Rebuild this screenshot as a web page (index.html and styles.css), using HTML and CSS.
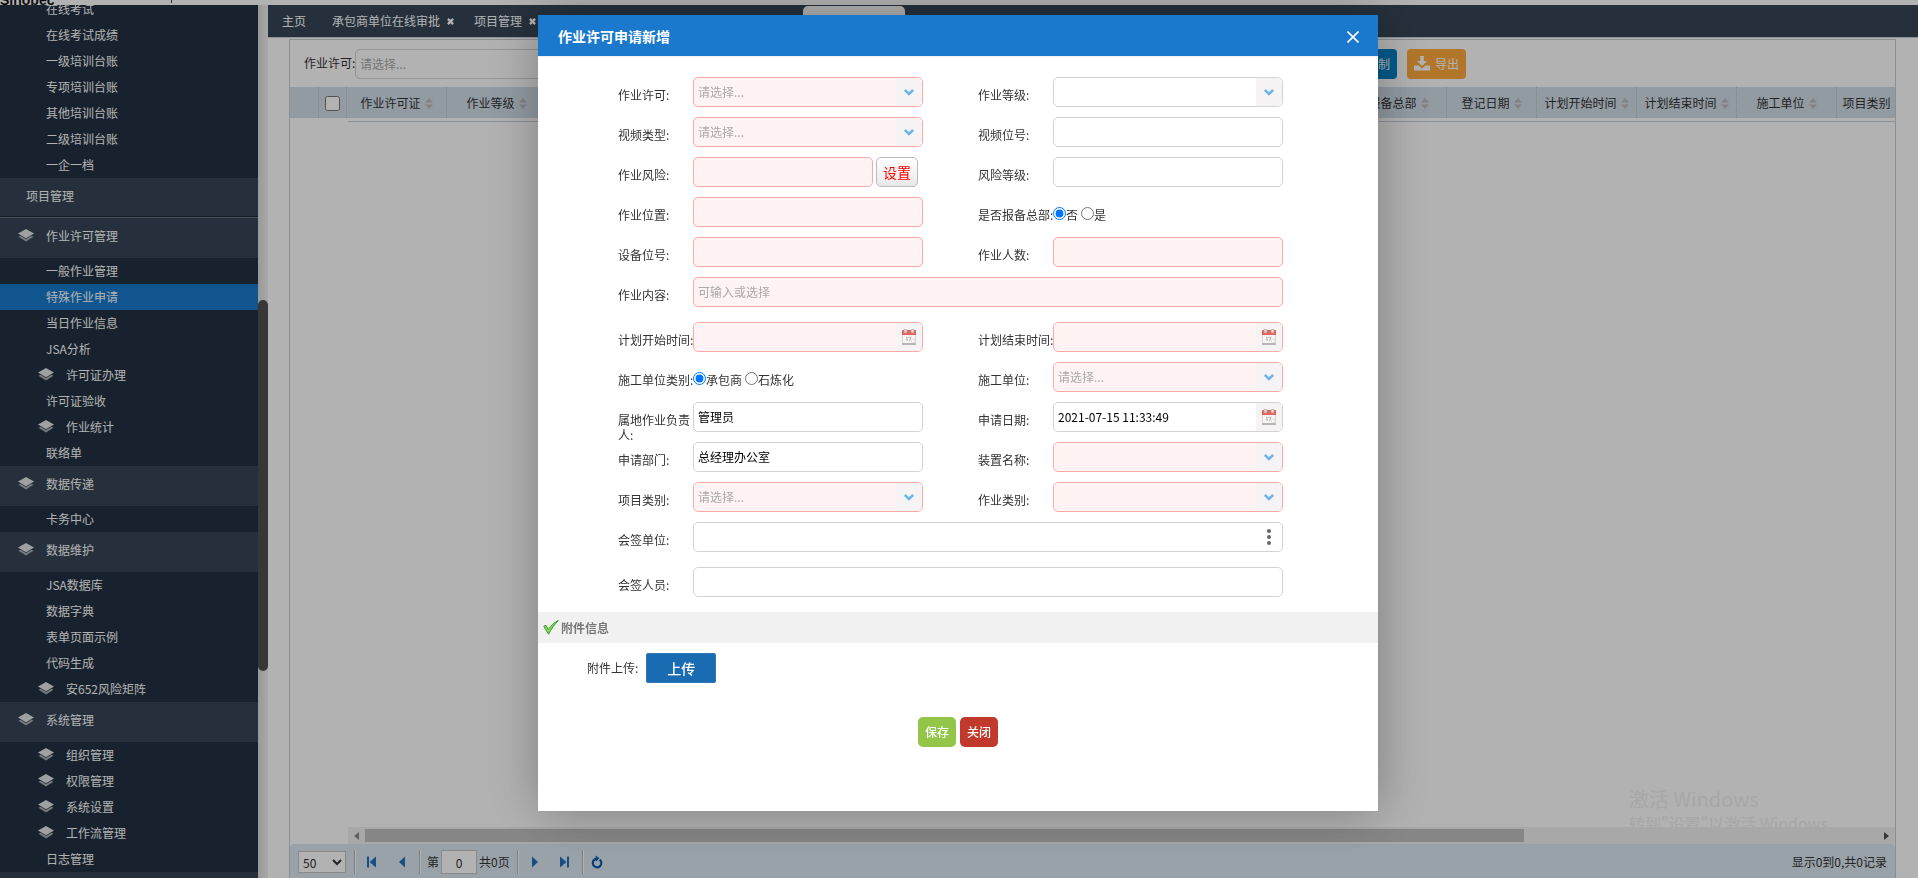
FILE: index.html
```html
<!DOCTYPE html>
<html lang="zh-CN">
<head>
  <meta charset="UTF-8" />
  <meta name="viewport" content="width=device-width, initial-scale=1.0" />
  <title>作业许可申请新增</title>
  <link rel="stylesheet" href="styles.css">
</head>
<body>
  <svg class="sprite" aria-hidden="true">
    <symbol id="layers" viewBox="0 0 16 14">
      <path d="M8 0 16 4.5 8 9.2 0 4.5Z" fill="#e4e6e8" />
      <path d="M0.5 7.8 2.6 6.7 8 9.9 13.4 6.7 15.5 7.8 8 12.6Z" fill="#a9aeb3" />
    </symbol>
    <symbol id="chevron" viewBox="0 0 10 7">
      <path d="M0.8 1 5 5 9.2 1" fill="none" stroke="#6fb7ea" stroke-width="2.6" />
    </symbol>
    <symbol id="calendar" viewBox="0 0 14 16">
      <rect x="0" y="2" width="14" height="13" fill="#f6f2f1" />
      <rect x="0" y="1" width="14" height="5" fill="#e8625f" />
      <path d="M0.5 6V15M13.5 6V15" stroke="#d9d5d4" fill="none" />
      <rect x="0" y="14" width="14" height="2" fill="#b9b5b4" />
      <rect x="2" y="0" width="3" height="4" rx="1" fill="#d8d4d3" stroke="#aaa6a5" stroke-width="0.5" />
      <rect x="9" y="0" width="3" height="4" rx="1" fill="#d8d4d3" stroke="#aaa6a5" stroke-width="0.5" />
      <path d="M4 8.5 5 8V12M6.5 8.3H9L7.5 12" fill="none" stroke="#b5b1b0" />
      <circle cx="11" cy="12" r="1.8" fill="#fff" stroke="#d0cccb" stroke-width="0.6" />
    </symbol>
    <symbol id="sort" viewBox="0 0 8 11">
      <path d="M4 0 8 4.5H0ZM4 11 8 6.5H0Z" fill="#bcbcbc" />
    </symbol>
    <symbol id="cross" viewBox="0 0 6 6">
      <path d="M0.8 0.8 5.2 5.2M5.2 0.8 0.8 5.2" stroke="#fff" stroke-width="2" />
    </symbol>
  </svg>

  <header class="top"><b>Sinopec</b><i class="tick"></i></header>

  <div class="page">
    <aside class="sidebar">
      <nav class="menu">
        <a href="#">在线考试</a>
        <a href="#">在线考试成绩</a>
        <a href="#">一级培训台账</a>
        <a href="#">专项培训台账</a>
        <a href="#">其他培训台账</a>
        <a href="#">二级培训台账</a>
        <a href="#">一企一档</a>
        <a href="#" class="module">项目管理</a>
        <a href="#" class="group"><svg><use href="#layers" /></svg>作业许可管理</a>
        <a href="#">一般作业管理</a>
        <a href="#" class="active">特殊作业申请</a>
        <a href="#">当日作业信息</a>
        <a href="#">JSA分析</a>
        <a href="#" class="sub"><svg><use href="#layers" /></svg>许可证办理</a>
        <a href="#">许可证验收</a>
        <a href="#" class="sub"><svg><use href="#layers" /></svg>作业统计</a>
        <a href="#">联络单</a>
        <a href="#" class="group"><svg><use href="#layers" /></svg>数据传递</a>
        <a href="#">卡务中心</a>
        <a href="#" class="group"><svg><use href="#layers" /></svg>数据维护</a>
        <a href="#">JSA数据库</a>
        <a href="#">数据字典</a>
        <a href="#">表单页面示例</a>
        <a href="#">代码生成</a>
        <a href="#" class="sub"><svg><use href="#layers" /></svg>安652风险矩阵</a>
        <a href="#" class="group"><svg><use href="#layers" /></svg>系统管理</a>
        <a href="#" class="sub"><svg><use href="#layers" /></svg>组织管理</a>
        <a href="#" class="sub"><svg><use href="#layers" /></svg>权限管理</a>
        <a href="#" class="sub"><svg><use href="#layers" /></svg>系统设置</a>
        <a href="#" class="sub"><svg><use href="#layers" /></svg>工作流管理</a>
        <a href="#">日志管理</a>
      </nav>
      <div class="vscroll"><div class="vthumb"></div></div>
    </aside>

    <main class="main">
      <div class="tabs">
        <a href="#">主页</a>
        <a href="#">承包商单位在线审批<svg><use href="#cross" /></svg></a>
        <a href="#">项目管理<svg><use href="#cross" /></svg></a>
        <span class="current"></span>
      </div>

      <section class="panel">
        <div class="toolbar">
          <label for="filter">作业许可:</label>
          <div class="combo filter">
            <select id="filter" class="empty"><option>请选择...</option></select>
            <span class="trigger"><svg class="chevron"><use href="#chevron" /></svg></span>
          </div>
          <div class="tools">
            <button type="button" class="btn blue">复制</button>
            <button type="button" class="btn orange">
              <svg viewBox="0 0 16 15"><path d="M6.2 0H9.8V5H13L8 10 3 5H6.2ZM0 9.5H4.6L8 12.6 11.4 9.5H16V14.5H0Z" fill="#fff" /></svg>导出
            </button>
          </div>
        </div>

        <div class="grid">
          <table>
            <thead>
              <tr>
                <th class="w-num"></th>
                <th class="w-check"><input type="checkbox" aria-label="全选" /></th>
                <th class="w-100">作业许可证<svg><use href="#sort" /></svg></th>
                <th class="w-100">作业等级<svg><use href="#sort" /></svg></th>
                <th></th>
                <th class="w-120">是否报备总部<svg><use href="#sort" /></svg></th>
                <th class="w-90">登记日期<svg><use href="#sort" /></svg></th>
                <th class="w-100">计划开始时间<svg><use href="#sort" /></svg></th>
                <th class="w-100">计划结束时间<svg><use href="#sort" /></svg></th>
                <th class="w-100">施工单位<svg><use href="#sort" /></svg></th>
                <th class="w-last">项目类别<svg><use href="#sort" /></svg></th>
              </tr>
            </thead>
          </table>
          <div class="rows">
            <div class="watermark">
              <p class="big">激活 Windows</p>
              <p>转到"设置"以激活 Windows.</p>
            </div>
          </div>
          <div class="hscroll">
            <svg viewBox="0 0 5 8"><path d="M5 0V8L0 4Z" fill="#888" /></svg>
            <div class="htrack"><div class="hthumb"></div></div>
            <svg viewBox="0 0 5 8"><path d="M0 0V8L5 4Z" fill="#505050" /></svg>
          </div>
        </div>

        <footer class="pager">
          <select aria-label="每页条数"><option>50</option></select>
          <i class="sep"></i>
          <button type="button" aria-label="首页"><svg viewBox="0 0 10 11"><path d="M0 0H2V11H0ZM9 0V11L2.5 5.5Z" fill="#2470bd" /></svg></button>
          <button type="button" aria-label="上一页"><svg viewBox="0 0 10 11"><path d="M8 0V11L2 5.5Z" fill="#2470bd" /></svg></button>
          <i class="sep"></i>
          <label for="pageno">第</label>
          <input type="text" id="pageno" value="0" />
          <span class="pages">共0页</span>
          <i class="sep"></i>
          <button type="button" aria-label="下一页"><svg viewBox="0 0 10 11"><path d="M2 0V11L8 5.5Z" fill="#2470bd" /></svg></button>
          <button type="button" aria-label="末页"><svg viewBox="0 0 10 11"><path d="M7 0H9V11H7ZM0 0V11L6.5 5.5Z" fill="#2470bd" /></svg></button>
          <i class="sep"></i>
          <button type="button" class="refresh" aria-label="刷新"><svg viewBox="0 0 12 14"><path d="M8.6 4.6A4.3 4.3 0 1 1 5 3.9" fill="none" stroke="#0a5cb0" stroke-width="2.2" /><path d="M4.6 0.6 8.4 3.3 5 6.4Z" fill="#0a5cb0" /></svg></button>
          <span class="total">显示0到0,共0记录</span>
        </footer>
      </section>
    </main>
  </div>

  <div class="mask">
    <div class="modal" role="dialog" aria-labelledby="dlg-title">
      <div class="modal-head">
        <h2 id="dlg-title">作业许可申请新增</h2>
        <button type="button" class="close" aria-label="关闭窗口"><svg viewBox="0 0 12 12"><path d="M0.5 0.5 11.5 11.5M11.5 0.5 0.5 11.5" stroke="#fff" stroke-width="1.6" /></svg></button>
      </div>

      <form class="form">
        <div class="row">
          <div class="field">
            <label for="permit">作业许可:</label>
            <div class="combo required">
              <select id="permit" class="empty"><option>请选择...</option></select>
              <span class="trigger"><svg class="chevron"><use href="#chevron" /></svg></span>
            </div>
          </div>
          <div class="field">
            <label for="level">作业等级:</label>
            <div class="combo">
              <select id="level"><option></option></select>
              <span class="trigger"><svg class="chevron"><use href="#chevron" /></svg></span>
            </div>
          </div>
        </div>
        <div class="row">
          <div class="field">
            <label for="video">视频类型:</label>
            <div class="combo required">
              <select id="video" class="empty"><option>请选择...</option></select>
              <span class="trigger"><svg class="chevron"><use href="#chevron" /></svg></span>
            </div>
          </div>
          <div class="field">
            <label for="videono">视频位号:</label>
            <div class="combo"><input type="text" id="videono" /></div>
          </div>
        </div>
        <div class="row">
          <div class="field">
            <label for="risk">作业风险:</label>
            <div class="combo required"><input type="text" id="risk" /></div>
            <button type="button" class="set">设置</button>
          </div>
          <div class="field">
            <label for="risklevel">风险等级:</label>
            <div class="combo"><input type="text" id="risklevel" /></div>
          </div>
        </div>
        <div class="row">
          <div class="field">
            <label for="place">作业位置:</label>
            <div class="combo required"><input type="text" id="place" /></div>
          </div>
          <div class="field" role="radiogroup" aria-labelledby="report-label">
            <span class="label" id="report-label">是否报备总部:</span>
            <div class="radios">
              <label><input type="radio" name="report" checked />否</label>
              <label><input type="radio" name="report" />是</label>
            </div>
          </div>
        </div>
        <div class="row">
          <div class="field">
            <label for="device">设备位号:</label>
            <div class="combo required"><input type="text" id="device" /></div>
          </div>
          <div class="field">
            <label for="people">作业人数:</label>
            <div class="combo required"><input type="text" id="people" /></div>
          </div>
        </div>
        <div class="row tall">
          <div class="field">
            <label for="content">作业内容:</label>
            <div class="combo required"><input type="text" id="content" placeholder="可输入或选择" /></div>
          </div>
        </div>
        <div class="row">
          <div class="field">
            <label for="start">计划开始时间:</label>
            <div class="combo required">
              <input type="text" id="start" />
              <span class="trigger"><svg class="calendar"><use href="#calendar" /></svg></span>
            </div>
          </div>
          <div class="field">
            <label for="end">计划结束时间:</label>
            <div class="combo required">
              <input type="text" id="end" />
              <span class="trigger"><svg class="calendar"><use href="#calendar" /></svg></span>
            </div>
          </div>
        </div>
        <div class="row">
          <div class="field" role="radiogroup" aria-labelledby="unit-label">
            <span class="label" id="unit-label">施工单位类别:</span>
            <div class="radios">
              <label><input type="radio" name="unittype" checked />承包商</label>
              <label><input type="radio" name="unittype" />石炼化</label>
            </div>
          </div>
          <div class="field">
            <label for="unit">施工单位:</label>
            <div class="combo required">
              <select id="unit" class="empty"><option>请选择...</option></select>
              <span class="trigger"><svg class="chevron"><use href="#chevron" /></svg></span>
            </div>
          </div>
        </div>
        <div class="row">
          <div class="field">
            <label for="owner">属地作业负责人:</label>
            <div class="combo"><input type="text" id="owner" value="管理员" /></div>
          </div>
          <div class="field">
            <label for="applydate">申请日期:</label>
            <div class="combo">
              <input type="text" id="applydate" value="2021-07-15 11:33:49" />
              <span class="trigger"><svg class="calendar"><use href="#calendar" /></svg></span>
            </div>
          </div>
        </div>
        <div class="row">
          <div class="field">
            <label for="dept">申请部门:</label>
            <div class="combo"><input type="text" id="dept" value="总经理办公室" /></div>
          </div>
          <div class="field">
            <label for="plant">装置名称:</label>
            <div class="combo required">
              <select id="plant"><option></option></select>
              <span class="trigger"><svg class="chevron"><use href="#chevron" /></svg></span>
            </div>
          </div>
        </div>
        <div class="row">
          <div class="field">
            <label for="project">项目类别:</label>
            <div class="combo required">
              <select id="project" class="empty"><option>请选择...</option></select>
              <span class="trigger"><svg class="chevron"><use href="#chevron" /></svg></span>
            </div>
          </div>
          <div class="field">
            <label for="worktype">作业类别:</label>
            <div class="combo required">
              <select id="worktype"><option></option></select>
              <span class="trigger"><svg class="chevron"><use href="#chevron" /></svg></span>
            </div>
          </div>
        </div>
        <div class="row tall">
          <div class="field">
            <label for="signunit">会签单位:</label>
            <div class="combo">
              <input type="text" id="signunit" />
              <span class="trigger plain"><svg class="dots" viewBox="0 0 4 16"><circle cx="2" cy="2" r="2" /><circle cx="2" cy="8" r="2" /><circle cx="2" cy="14" r="2" /></svg></span>
            </div>
          </div>
        </div>
        <div class="row">
          <div class="field">
            <label for="signer">会签人员:</label>
            <div class="combo"><input type="text" id="signer" /></div>
          </div>
        </div>
      </form>

      <h3 class="section">
        <svg viewBox="0 0 16 15"><path d="M0.8 6.2 3 5.4 5.4 9.6C8 5.6 11.3 2.4 15.3 0.6 11.5 4.4 8.4 8.6 5.6 14.2Z" fill="#8be04e" stroke="#2f9a2f" /></svg>附件信息
      </h3>
      <div class="upload">
        <label for="upload">附件上传:</label>
        <button type="button" id="upload">上传</button>
      </div>
      <div class="actions">
        <button type="button" class="save">保存</button>
        <button type="button" class="cancel">关闭</button>
      </div>
    </div>
  </div>
</body>
</html>
```

FILE: styles.css
```css
* {
  box-sizing: border-box;
}
body {
  margin: 0;
  height: 100vh;
  display: flex;
  flex-direction: column;
  overflow: hidden;
  background: #fff;
  color: #333;
  font: 12px/16px "Noto Sans CJK SC", sans-serif;
}
input, select, button {
  font: inherit;
  color: inherit;
  margin: 0;
}
button {
  cursor: pointer;
}
a {
  color: #fff;
  text-decoration: none;
}
.sprite {
  display: none;
}

/* top strip */
.top {
  flex: none;
  height: 5px;
  display: flex;
  justify-content: flex-start;
  align-items: flex-end;
  overflow: hidden;
  line-height: 10px;
  color: #111;
}
.top b {
  width: 171px;
  font-family: "Liberation Sans", sans-serif;
  font-size: 14px;
}
.tick {
  width: 1px;
  height: 3px;
  margin-bottom: 2px;
  background: #444;
}
.page {
  flex: 1;
  min-height: 0;
  display: flex;
}

/* sidebar */
.sidebar {
  flex: none;
  width: 268px;
  display: flex;
  overflow: hidden;
  background: #364657;
}
.menu {
  flex: 1;
  margin-top: -9px;
}
.menu a {
  display: flex;
  align-items: center;
  height: 26px;
  padding-left: 46px;
  background: #223142;
}
.menu svg {
  width: 16px;
  height: 14px;
  margin-right: 12px;
}
.menu .sub {
  padding-left: 38px;
}
.menu .active {
  background: #197acc;
}
.menu .module {
  height: 40px;
  padding: 0 0 4px 26px;
  background: #364657;
  border-bottom: 1px solid #66727f;
  box-shadow: inset 0 -1px #1d2834;
}
.menu .group {
  height: 40px;
  padding: 0 0 4px 18px;
  background: #364657;
}
.vscroll {
  width: 10px;
  padding-top: 295px;
  background: linear-gradient(90deg, #dcdcdc, #f0f0f0);
}
.vthumb {
  height: 371px;
  border-radius: 5px;
  background: #505050;
}

/* content */
.main {
  flex: 1;
  min-width: 0;
  display: flex;
  flex-direction: column;
}
.tabs {
  flex: none;
  height: 33px;
  display: flex;
  align-items: center;
  padding-left: 14px;
  background: #364657;
  border-bottom: 1px solid #c9d0d6;
}
.tabs a {
  margin-right: 26px;
}
.tabs a + a {
  margin-right: 20px;
}
.tabs svg {
  width: 7px;
  height: 7px;
  margin: 0 0 1px 7px;
}
.current {
  align-self: stretch;
  width: 102px;
  margin: 1px 0 0 247px;
  border-radius: 5px 5px 0 0;
  background: #fff;
}
.panel {
  flex: 1;
  min-height: 0;
  display: flex;
  flex-direction: column;
  margin: 1px 22px 0 21px;
  border: 1px solid #c5ced6;
  border-width: 1px 1px 0;
}
.toolbar {
  flex: none;
  height: 47px;
  display: flex;
  align-items: center;
  padding-left: 14px;
}
.toolbar label {
  width: 51px;
  padding-bottom: 2px;
  white-space: nowrap;
}
.filter {
  flex: 0 0 190px;
}
.tools {
  flex: 1;
  display: flex;
  justify-content: flex-end;
  gap: 10px;
  padding-right: 429px;
}
.btn {
  height: 30px;
  padding: 0 7px;
  border: 0;
  border-radius: 4px;
  color: #fff;
}
.blue {
  background: #0083c9;
}
.orange {
  display: flex;
  align-items: center;
  gap: 5px;
  background: #ffaa3d;
}
.orange svg {
  width: 16px;
  height: 15px;
}

/* grid */
.grid {
  flex: 1;
  min-height: 0;
  display: flex;
  flex-direction: column;
  overflow: hidden;
}
table {
  flex: none;
  width: calc(100% + 14px);
  table-layout: fixed;
  border-collapse: separate;
  border-spacing: 0;
  background: #d1dde9;
}
th {
  height: 31px;
  padding: 0;
  font-weight: normal;
  white-space: nowrap;
  border-right: 1px dotted #b9bec3;
}
th svg {
  width: 8px;
  height: 11px;
  margin-left: 4px;
  vertical-align: -1px;
}
th input {
  width: 15px;
  height: 15px;
  vertical-align: middle;
}
.w-num { width: 29px; }
.w-check { width: 28px; }
.w-90 { width: 90px; }
.w-100 { width: 100px; }
.w-120 { width: 120px; }
.w-last { width: 72px; }
.rows {
  flex: 1;
  min-height: 0;
  display: flex;
  justify-content: flex-end;
  align-items: flex-end;
  margin: 3px 0 0 58px;
  border-top: 1px solid #c5ced6;
  overflow: hidden;
}
.watermark {
  width: 266px;
  height: 41px;
  color: #f0f0f0;
  font-size: 16px;
  line-height: 22px;
  white-space: nowrap;
}
.watermark p {
  margin: 0;
}
.watermark .big {
  font-size: 20px;
  line-height: 26px;
}
.hscroll {
  flex: none;
  height: 17px;
  margin-left: 58px;
  display: flex;
  align-items: center;
  padding: 0 6px;
  background: #f1f1f1;
}
.hscroll svg {
  width: 5px;
  height: 8px;
}
.htrack {
  flex: 1;
  margin: 0 6px;
}
.hthumb {
  width: calc(77% - 6px);
  height: 13px;
  background: #c1c1c1;
}

/* pager */
.pager {
  flex: none;
  height: 34px;
  display: flex;
  align-items: center;
  padding: 2px 8px 0;
  border-radius: 4px 4px 0 0;
  background: #dde9f3;
}
.pager select {
  width: 48px;
  height: 22px;
  margin-right: 6px;
  border: 1px solid #c5c5c5;
  background: #fff;
}
.pager button {
  width: 30px;
  padding: 0;
  border: 0;
  background: none;
}
.pager button svg {
  display: block;
  width: 10px;
  height: 12px;
  margin: 0 auto;
}
.pager .refresh {
  width: 24px;
}
.pager .refresh svg {
  width: 12px;
  height: 14px;
}
.pager label {
  margin-left: 5px;
}
.pager input {
  width: 36px;
  height: 24px;
  padding: 0;
  text-align: center;
  border: 1px solid #c5c5c5;
  margin: 0 2px;
}
.pages {
  margin-right: 5px;
}
.sep {
  width: 2px;
  height: 24px;
  margin: 0 1px 0 2px;
  border-left: 1px solid #bbb;
  background: #fff;
}
.total {
  margin-left: auto;
}

/* dialog */
.mask {
  position: fixed;
  inset: 0;
  display: flex;
  justify-content: center;
  align-items: flex-start;
  padding: 15px 2px 0 0;
  background: rgba(0, 0, 0, 0.3);
}
.modal {
  width: 840px;
  max-width: 100%;
  padding-bottom: 64px;
  background: #fff;
  box-shadow: 1px 1px 50px rgba(0, 0, 0, 0.3);
}
.modal-head {
  height: 42px;
  display: flex;
  align-items: center;
  justify-content: space-between;
  padding: 0 19px 0 20px;
  background: #1a79cc;
  border-bottom: 1px solid #eee;
}
.modal-head h2 {
  margin: 0;
  font-size: 14px;
  font-weight: bold;
  color: #fff;
}
.close {
  padding: 0;
  border: 0;
  background: none;
}
.close svg {
  display: block;
  width: 12px;
  height: 12px;
  margin-top: 3px;
}
.form {
  padding: 20px 95px 15px 80px;
}
.row {
  display: flex;
  gap: 55px;
  height: 30px;
  margin-bottom: 10px;
}
.row:last-child {
  margin-bottom: 0;
}
.tall {
  margin-bottom: 15px;
}
.field {
  flex: 1;
  display: flex;
}
.field > label, .label {
  flex: none;
  width: 78px;
  margin-right: -3px;
  padding-top: 10px;
  line-height: 15px;
}
.combo {
  flex: 1;
  height: 30px;
  display: flex;
  overflow: hidden;
  border: 1px solid #d3d3d3;
  border-radius: 5px;
  background: #fff;
}
.combo input, .combo select {
  flex: 1;
  min-width: 0;
  padding: 0 4px;
  border: 0;
  outline: 0;
  color: #000;
  background: none;
  appearance: none;
}
.combo .empty, .combo input::placeholder {
  color: #aaa;
}
.required {
  border-color: #ffa8a8;
  background: #fff3f3;
}
.trigger {
  width: 26px;
  display: flex;
  align-items: center;
  justify-content: center;
  background: #f5f3f3;
}
.plain {
  background: none;
}
.chevron {
  width: 10px;
  height: 7px;
}
.calendar {
  width: 14px;
  height: 16px;
}
.dots {
  width: 4px;
  height: 16px;
  fill: #666;
}
.set {
  width: 42px;
  height: 30px;
  margin: 0 5px 0 3px;
  padding: 0;
  border: 1px solid #bbb;
  border-radius: 5px;
  background: linear-gradient(#fff, #e8e8e8);
  color: #f00;
  font-size: 14px;
}
.radios {
  display: flex;
  gap: 3px;
  padding-top: 10px;
}
.radios label {
  display: flex;
  align-items: flex-start;
}
.radios input {
  width: 13px;
  height: 13px;
}
.section {
  height: 31px;
  display: flex;
  align-items: center;
  gap: 2px;
  margin: 0;
  padding-left: 5px;
  background: #f1f1f1;
  color: #777;
  font-size: 12px;
}
.section svg {
  width: 16px;
  height: 15px;
}
.upload {
  display: flex;
  align-items: center;
  gap: 8px;
  padding: 10px 0 0 49px;
}
.upload button {
  width: 70px;
  height: 30px;
  padding: 0;
  border: 1px solid #2e78b5;
  border-radius: 2px;
  background: #196cb1;
  color: #fff;
  font-size: 14px;
  font-weight: 500;
}
.actions {
  display: flex;
  justify-content: center;
  gap: 4px;
  margin-top: 34px;
}
.actions button {
  width: 38px;
  height: 30px;
  padding: 0;
  border: 0;
  border-radius: 5px;
  color: #fff;
  font-weight: 500;
}
.save {
  background: #92c548;
}
.cancel {
  background: #c0392b;
}
```
